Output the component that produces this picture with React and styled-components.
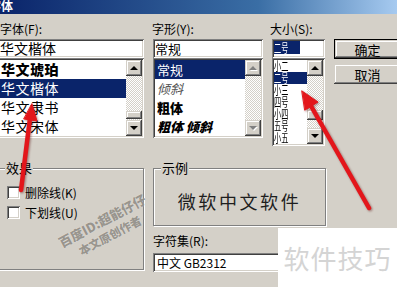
import React from 'react';
import styled, { createGlobalStyle } from 'styled-components';

const face = '#d4d0c8';
const navy = '#0a246a';

const sunken = `
  box-shadow: inset 1px 1px #808080, inset -1px -1px #ffffff,
    inset 2px 2px #404040, inset -2px -2px ${face};
`;

const raised = `
  box-shadow: inset -1px -1px #404040, inset 1px 1px ${face},
    inset -2px -2px #808080, inset 2px 2px #ffffff;
`;

const GlobalStyle = createGlobalStyle`
  html, body {
    margin: 0;
    padding: 0;
    background: ${face};
    overflow: hidden;
  }
`;

const Window = styled.div`
  position: relative;
  width: 397px;
  height: 287px;
  overflow: hidden;
  background: ${face};
  font-family: "Noto Sans CJK SC", "DejaVu Sans", sans-serif;
  font-size: 12px;
  color: #000;
`;

const TitleBar = styled.div`
  height: 14px;
  background: linear-gradient(to right, ${navy} 0%, #3a6ea5 65%, #a6caf0 100%);
  color: #fff;
  font-weight: bold;
  font-size: 12px;
  line-height: 12px;
  white-space: nowrap;
  overflow: hidden;
  span {
    display: inline-block;
    margin-left: -11px;
  }
`;

const Body = styled.div`
  margin-left: -2px;
  padding-top: 7px;
  display: flex;
  flex-direction: column;
  gap: 15px;
`;

const Row = styled.div`
  display: flex;
  gap: 9px;
  align-items: flex-start;
`;

const Column = styled.div`
  display: flex;
  flex-direction: column;
  flex: none;
  width: ${p => p.$w}px;
  margin-top: ${p => p.$top || 0}px;
  gap: ${p => p.$gap || 0}px;
`;

const Label = styled.div`
  height: ${p => p.$h || 18}px;
  line-height: 16px;
  font-size: 12px;
  white-space: nowrap;
  margin-left: ${p => p.$shift || 0}px;
  margin-top: ${p => p.$top || 0}px;
`;

const TextBox = styled.div`
  height: 19px;
  box-sizing: border-box;
  background: #fff;
  ${sunken}
  padding: 2px ${p => p.$pad ?? 3}px 0;
  font-size: ${p => p.$size || 13}px;
  line-height: 15px;
  white-space: nowrap;
  overflow: hidden;
`;

const Highlight = styled.span`
  display: inline-block;
  width: 26px;
  overflow: hidden;
  background: ${navy};
  color: #fff;
  height: 13px;
  line-height: 13px;
  vertical-align: top;
`;

const Narrow = styled.span`
  display: inline-block;
  transform: scaleX(0.6);
  transform-origin: left center;
  white-space: nowrap;
`;

const ListBox = styled.div`
  height: ${p => p.$h}px;
  box-sizing: border-box;
  padding: 2px;
  background: #fff;
  ${sunken}
  display: flex;
`;

const Items = styled.div`
  flex: 1;
  min-width: 0;
  overflow: hidden;
`;

const Item = styled.div`
  height: ${p => p.$h}px;
  line-height: ${p => p.$h}px;
  padding-left: ${p => p.$pad || 0}px;
  white-space: nowrap;
  overflow: hidden;
  font-size: ${p => p.$size || 14}px;
  font-weight: ${p => (p.$bold ? 900 : 400)};
  font-style: ${p => (p.$italic ? 'italic' : 'normal')};
  letter-spacing: ${p => p.$spacing || 0}px;
  background: ${p => (p.$selected ? navy : 'transparent')};
  color: ${p => (p.$selected ? '#fff' : p.$muted ? '#555' : '#000')};
`;

const ScrollBar = styled.div`
  width: 16px;
  flex: none;
  display: flex;
  flex-direction: column;
`;

const Track = styled.div`
  flex: ${p => p.$grow ?? 1};
  background: repeating-conic-gradient(${face} 0 25%, #fff 0 50%) 0 0 / 2px 2px;
`;

const ScrollButton = styled.div`
  height: ${p => p.$h || 16}px;
  flex: none;
  background: ${face};
  ${raised}
  display: flex;
  align-items: center;
  justify-content: center;
`;

const Glyph = styled.span`
  width: 0;
  height: 0;
  border-left: 4px solid transparent;
  border-right: 4px solid transparent;
  ${p => (p.$down ? 'border-top' : 'border-bottom')}: 4px solid ${p => (p.$disabled ? '#808080' : '#000')};
  filter: ${p => (p.$disabled ? 'drop-shadow(1px 1px 0 #fff)' : 'none')};
`;

const PushButton = styled.div`
  width: 67px;
  height: 20px;
  box-sizing: border-box;
  background: ${face};
  border: ${p => (p.$default ? '1px solid #000' : 'none')};
  ${raised}
  display: flex;
  align-items: center;
  justify-content: center;
  font-size: 13px;
`;

const Group = styled.fieldset`
  margin: 0;
  padding: ${p => p.$padTop || 0}px 0 0 6px;
  width: ${p => p.$w}px;
  height: ${p => p.$h}px;
  box-sizing: border-box;
  border: 1px solid #808080;
  box-shadow: inset 1px 1px #fff, 1px 1px #fff;
  min-width: 0;
`;

const GroupTitle = styled.legend`
  margin-left: ${p => p.$shift || 0}px;
  padding: 0 1px;
  font-size: 13px;
  line-height: 14px;
  background: ${face};
`;

const CheckRow = styled.div`
  height: 20px;
  display: flex;
  align-items: center;
  gap: 5px;
  padding-left: 2px;
  font-size: 12px;
`;

const CheckBox = styled.span`
  width: 13px;
  height: 13px;
  box-sizing: border-box;
  background: #fff;
  ${sunken}
`;

const SampleText = styled.div`
  text-align: center;
  padding-top: 15px;
  padding-right: 6px;
  font-size: 18px;
  letter-spacing: 2.6px;
  color: #1e1e1e;
  line-height: 22px;
`;

const Combo = styled.div`
  height: 19px;
  box-sizing: border-box;
  background: #fff;
  ${sunken}
  padding: 2px 2px 0 4px;
  display: flex;
  font-size: 12px;
  line-height: 15px;
  span {
    flex: 1;
  }
`;

const Stamp = styled.div`
  position: absolute;
  right: 0;
  bottom: 0;
  width: 119px;
  height: 59px;
  background: #fff;
  display: flex;
  align-items: center;
  justify-content: center;
  font-size: 26px;
  letter-spacing: 1px;
  color: #d4d4d4;
`;

const Watermark = styled.div`
  position: absolute;
  left: 48px;
  top: 211px;
  width: 116px;
  text-align: center;
  transform: rotate(-28deg);
  color: rgba(130, 126, 118, 0.8);
  font-weight: 900;
  line-height: 17px;
  text-shadow: 0 0 1px rgba(255, 255, 255, 0.6);
  div:first-child {
    font-size: 13px;
  }
  div:last-child {
    font-size: 11.5px;
  }
`;

const Arrows = styled.svg`
  position: absolute;
  left: 0;
  top: 0;
  pointer-events: none;
  filter: drop-shadow(1px 1px 1px rgba(80, 0, 0, 0.45));
`;

const fonts = [
  { name: '华文琥珀', bold: true },
  { name: '华文楷体', selected: true },
  { name: '华文隶书' },
  { name: '华文宋体' },
];

const styles = [
  { name: '常规', selected: true },
  { name: '倾斜', italic: true, muted: true },
  { name: '粗体', bold: true },
  { name: '粗体 倾斜', bold: true, italic: true },
];

const sizes = ['小二', '二号', '小三', '四号', '小四', '五号', '小五'];

function Scroller({ disabled, before, thumb, after }) {
  return (
    <ScrollBar>
      <ScrollButton><Glyph $disabled={disabled} /></ScrollButton>
      <Track $grow={before} />
      {thumb ? <ScrollButton $h={thumb} /> : null}
      {after ? <Track $grow={after} /> : null}
      <ScrollButton><Glyph $down $disabled={disabled} /></ScrollButton>
    </ScrollBar>
  );
}

export default function App() {
  return (
    <Window>
      <GlobalStyle />
      <TitleBar><span>字体</span></TitleBar>
      <Body>
        <Row>
          <Column $w={146}>
            <Label $shift={2}>字体(F):</Label>
            <TextBox $size={14} $pad={2}>华文楷体</TextBox>
            <ListBox $h={80}>
              <Items>
                {fonts.map(f => (
                  <Item key={f.name} $h={19} $pad={1} $spacing={0.5} $bold={f.bold} $selected={f.selected}>
                    {f.name}
                  </Item>
                ))}
              </Items>
              <Scroller before={35} thumb={8} after={1} />
            </ListBox>
          </Column>
          <Column $w={110}>
            <Label $shift={-1}>字形(Y):</Label>
            <TextBox $size={13} $pad={2}>常规</TextBox>
            <ListBox $h={80}>
              <Items>
                {styles.map(s => (
                  <Item
                    key={s.name}
                    $h={19}
                    $pad={2}
                    $size={13}
                    $bold={s.bold}
                    $italic={s.italic}
                    $muted={s.muted}
                    $selected={s.selected}
                  >
                    {s.name}
                  </Item>
                ))}
              </Items>
              <Scroller disabled />
            </ListBox>
          </Column>
          <Column $w={53}>
            <Label $shift={-2}>大小(S):</Label>
            <TextBox $size={12} $pad={2}>
              <Highlight><Narrow>二号</Narrow></Highlight>
            </TextBox>
            <ListBox $h={88}>
              <Items>
                {sizes.map(s => (
                  <Item key={s} $h={12} $size={12} $selected={s === '二号'}>
                    <Narrow>{s}</Narrow>
                  </Item>
                ))}
              </Items>
              <Scroller before={34} thumb={10} after={8} />
            </ListBox>
          </Column>
          <Column $w={67} $top={18} $gap={5}>
            <PushButton $default>确定</PushButton>
            <PushButton>取消</PushButton>
          </Column>
        </Row>
        <Row>
          <Group $w={146} $h={109} $padTop={7}>
            <GroupTitle>效果</GroupTitle>
            <CheckRow><CheckBox />删除线(K)</CheckRow>
            <CheckRow><CheckBox />下划线(U)</CheckRow>
          </Group>
          <Column $w={173}>
            <Group $w={173} $h={65}>
              <GroupTitle $shift={1}>示例</GroupTitle>
              <SampleText>微软中文软件</SampleText>
            </Group>
            <Label $top={7} $h={20}>字符集(R):</Label>
            <Combo><span>中文 GB2312</span></Combo>
          </Column>
        </Row>
      </Body>

      <Watermark>
        <div>百度ID:超能仔仔</div>
        <div>本文原创作者</div>
      </Watermark>

      <Stamp>软件技巧</Stamp>

      <Arrows width="397" height="287" viewBox="0 0 397 287">
        <g fill="#e3161b" stroke="#e3161b" strokeLinecap="round">
          <line x1="21" y1="190" x2="30" y2="118" strokeWidth="4.5" />
          <polygon points="32,104 37,121 24,119" strokeWidth="1" strokeLinejoin="round" />
          <line x1="369" y1="208" x2="311" y2="106" strokeWidth="4.5" />
          <polygon points="302,91 318,102 305,110" strokeWidth="1" strokeLinejoin="round" />
        </g>
      </Arrows>
    </Window>
  );
}
